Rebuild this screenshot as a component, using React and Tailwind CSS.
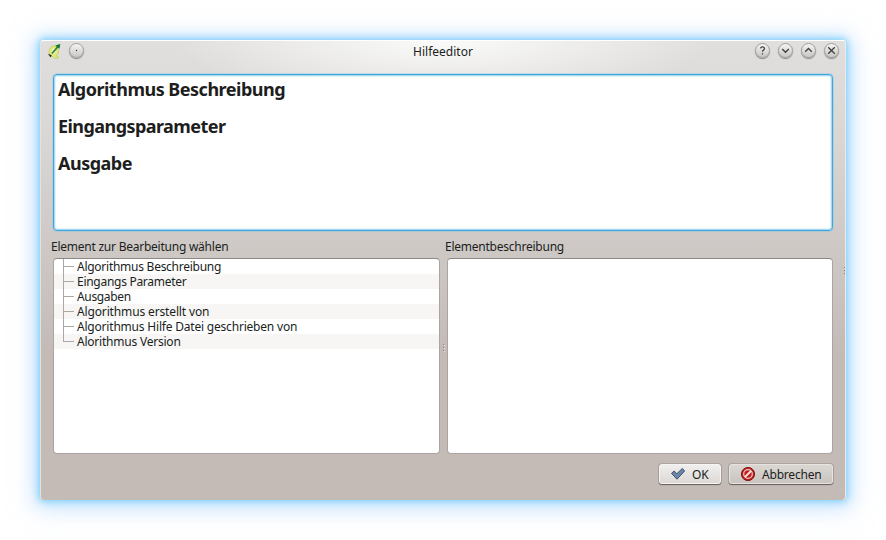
const items = [
  { text: "Algorithmus Beschreibung", track: "tracking-[-0.26px]" },
  { text: "Eingangs Parameter", track: "tracking-[-0.28px]" },
  { text: "Ausgaben", track: "tracking-[-0.35px]" },
  { text: "Algorithmus erstellt von", track: "tracking-[-0.14px]" },
  { text: "Algorithmus Hilfe Datei geschrieben von", track: "tracking-[-0.2px]" },
  { text: "Alorithmus Version", track: "tracking-[-0.22px]" },
];

function RoundButton({ children }) {
  return (
    <span className="flex h-[15px] w-[15px] items-center justify-center rounded-full border border-[#a19f9d] bg-linear-to-b from-[#f6f5f4] to-[#c9c6c3] shadow-[0_1px_1px_rgba(0,0,0,0.4)]">
      <svg width="13" height="13" viewBox="0 0 13 13" className="shrink-0" fill="none" stroke="#3f3e3d" strokeWidth="1.3">
        {children}
      </svg>
    </span>
  );
}

function AppIcon() {
  return (
    <svg width="15" height="17" viewBox="0 0 15 17" fill="none">
      <path d="M8.500 3C5 2.400 2.300 4.800 2 8.300c-.2 3 1.300 5.200 4 5.400 1.500 2.300 4.500 2.300 6 .3-1.300.3-2.300-.1-2.700-1.100C11.500 11.200 12 8.500 11 5.500Z" fill="#e2ea76" stroke="#bcc65c" strokeWidth=".7" />
      <path d="M7.800 5.200C5.500 5.600 4.600 7.200 4.700 9.500c.1 1 .5 1.700 1.200 1.900C8 11 9 9 8.800 6.500Z" fill="#f5f6da" />
      <path d="M5 10.500 11 3.500" stroke="#2f7f3f" strokeWidth="1.800" />
      <path d="M8.200 2.600 13.300 1 12.500 5.800Z" fill="#127a2b" />
      <path d="M1 11 4.600 12 3.700 14.500Z" fill="#20291e" />
    </svg>
  );
}

function Grip() {
  return (
    <span className="flex flex-col gap-[2px]">
      <i className="block h-px w-px bg-[#85807d] shadow-[1px_1px_0_#e8e5e3]" />
      <i className="block h-px w-px bg-[#85807d] shadow-[1px_1px_0_#e8e5e3]" />
      <i className="block h-px w-px bg-[#85807d] shadow-[1px_1px_0_#e8e5e3]" />
    </span>
  );
}

export default function App() {
  return (
    <div className="h-[540px] w-[886px] overflow-hidden bg-white pl-10 pt-10 font-['Noto_Sans','Open_Sans',sans-serif] text-[12px] leading-[15px] text-[#201e1d]">
      <div className="relative h-[460px] w-[806px] rounded-[4px] bg-[radial-gradient(ellipse_270px_64px_at_50%_0,#fbfbfa_0,#fbfbfa00_100%),linear-gradient(to_bottom,#e0dfdd_0,#dbd8d6_80px,#d0cbc8_190px,#c4bbb7_310px,#c4bbb7_100%)] shadow-[0_0_7px_1px_#7ccdfa,0_1px_14px_4px_#a6dcfb80,0_3px_24px_7px_#bcdcff80]">
        <div className="flex h-full flex-col rounded-[4px] border-l border-r border-t border-l-[#e4e1df] border-r-[#eeeae8] border-t-white pl-3 pr-3">
          <header className="flex h-[33px] shrink-0 items-start justify-between pt-[2px]">
            <div className="-ml-[6px] flex w-[100px] items-start gap-[7px]">
              <AppIcon />
              <RoundButton><circle cx="6.500" cy="6.500" r=".7" fill="#343332" stroke="none" /></RoundButton>
            </div>
            <h1 className="pl-[6px] pt-px text-[12px] leading-[15px] tracking-[0]">Hilfeeditor</h1>
            <div className="-mr-[6px] flex w-[106px] justify-end gap-2">
              <RoundButton><path d="M4.500 4.300C5 2.300 8.500 2.500 8.500 4.500 8.500 6 6.500 6 6.500 7.700M6.500 9.200v1.300" /></RoundButton>
              <RoundButton><path d="m3.200 5 3.300 3.300L9.800 5" /></RoundButton>
              <RoundButton><path d="m3.200 7.800 3.300-3.300 3.300 3.300" /></RoundButton>
              <RoundButton><path d="m3.200 3.200 6.600 6.600m0-6.600-6.600 6.600" /></RoundButton>
            </div>
          </header>
          <section className="h-[157px] w-[780px] shrink-0 rounded-[4px] border border-[#3fa7dc] bg-white pl-1 pt-[2px] text-[18px] font-bold leading-6 shadow-[inset_0_0_0_1px_#a5d9f4,inset_0_0_0_2px_#e3f4fc,0_0_0_1px_#7fc1e460]">
            <h2 className="mb-[13px] tracking-[-0.5px]">Algorithmus Beschreibung</h2>
            <h2 className="mb-[13px] tracking-[-0.56px]">Eingangsparameter</h2>
            <h2 className="tracking-[-0.5px]">Ausgabe</h2>
          </section>
          <main className="flex h-[223px] w-[780px] shrink-0">
            <section className="w-[387px]">
              <h3 className="-ml-[2px] h-[27px] pt-2 tracking-[-0.24px]">Element zur Bearbeitung wählen</h3>
              <div className="h-[196px] overflow-hidden rounded-[4px] border border-[#aaa5a2] border-t-[#8c8784] bg-white">
                {items.map((item, i) => (
                  <div key={item.text} className="flex h-[15px] pl-[9px] even:bg-[#f7f6f5]">
                    <span className="flex w-[14px] flex-col">
                      <i className="block h-2 w-[11px] border-b border-l border-[#aaa7a5]" />
                      {i < 5 && <i className="block h-[7px] border-l border-[#aaa7a5]" />}
                    </span>
                    <span className={item.track}>{item.text}</span>
                  </div>
                ))}
              </div>
            </section>
            <div className="flex w-[7px] justify-center pt-[113px]"><Grip /></div>
            <section className="w-[386px]">
              <h3 className="-ml-[2px] h-[27px] pt-2 tracking-[-0.24px]">Elementbeschreibung</h3>
              <div className="h-[196px] rounded-[4px] border border-[#aaa5a2] border-t-[#8c8784] bg-white" />
            </section>
          </main>
          <footer className="-mr-px flex justify-end gap-2 pr-px pt-[10px]">
            <button className="flex h-5 w-[62px] items-center rounded-[3px] border border-[#f6f5f4] bg-linear-to-b from-[#f0efee] to-[#dcd9d6] pl-[10px] shadow-[0_1px_1px_0_rgba(70,62,58,0.7),0_0_0_1px_rgba(90,82,78,0.2)]">
              <svg width="16" height="14" viewBox="0 0 16 14"><path d="M1.500 6.300 4.200 4l2.600 2.800L12.300 1.500 14.600 4 7 12.200Z" fill="#6b88ac" stroke="#3b5068" strokeLinejoin="round" /></svg>
              <span className="ml-[6px] pt-px">OK</span>
            </button>
            <button className="flex h-5 w-[104px] items-center rounded-[3px] border border-[#e6e3e0] bg-linear-to-b from-[#dad7d3] to-[#c9c4bf] pl-[10px] shadow-[0_1px_1px_0_rgba(70,62,58,0.7),0_0_0_1px_rgba(90,82,78,0.2)]">
              <svg width="16" height="16" viewBox="0 0 16 16" fill="none"><circle cx="8" cy="8" r="6.600" fill="#c01a1a" stroke="#7d1010" strokeWidth=".9" /><circle cx="8" cy="8" r="4.300" stroke="#e8cfcc" strokeWidth="1.200" /><path d="m5 11 6-6" stroke="#f0dedc" strokeWidth="1.900" /></svg>
              <span className="ml-[6px] pt-px tracking-[-0.2px]">Abbrechen</span>
            </button>
          </footer>
        </div>
        <div className="absolute left-[804px] top-[227px]"><Grip /></div>
      </div>
    </div>
  );
}
